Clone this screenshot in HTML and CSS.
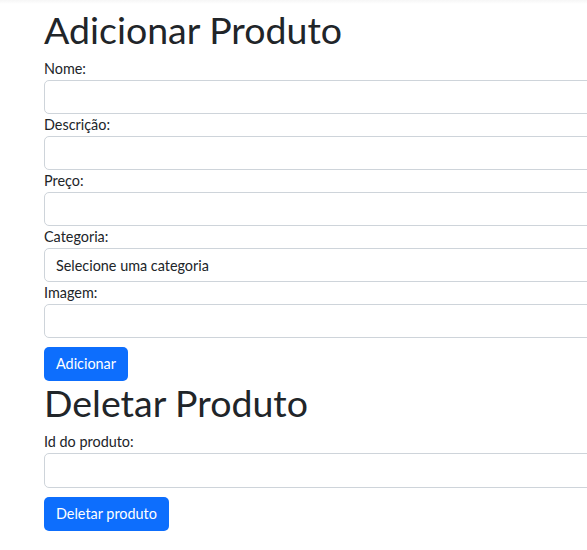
FILE: index.html
```html
<!DOCTYPE html>
<html lang="pt-BR">
<head>
<meta charset="utf-8">
<title>Produtos</title>
<link rel="stylesheet" href="styles.css">
</head>
<body>
<div class="topbar"></div>
<main class="page">
  <form class="panel">
    <h1 class="title">Adicionar Produto</h1>
    <label class="label" for="nome">Nome:</label>
    <input class="field" id="nome" type="text">
    <label class="label" for="descricao">Descrição:</label>
    <input class="field" id="descricao" type="text">
    <label class="label" for="preco">Preço:</label>
    <input class="field" id="preco" type="text">
    <label class="label" for="categoria">Categoria:</label>
    <select class="field select" id="categoria">
      <option>Selecione uma categoria</option>
    </select>
    <label class="label" for="imagem">Imagem:</label>
    <input class="field" id="imagem" type="text">
    <button class="btn" type="button">Adicionar</button>
  </form>
  <form class="panel panel-delete">
    <h1 class="title">Deletar Produto</h1>
    <label class="label" for="id">Id do produto:</label>
    <input class="field field-id" id="id" type="text">
    <button class="btn" type="button">Deletar produto</button>
  </form>
</main>
</body>
</html>
```
FILE: styles.css
```css
html, body {
  margin: 0;
  padding: 0;
  background: #fff;
  overflow: hidden;
}
body {
  font-family: "Lato", "Noto Sans", sans-serif;
  color: #212529;
}
.topbar {
  height: 4px;
  background: linear-gradient(#f6f6f6, #fff);
}
.page {
  padding: 4px 0 0 44px;
  width: 640px;
}
.panel {
  display: flex;
  flex-direction: column;
  align-items: stretch;
  margin: 0;
}
.title {
  font-size: 37.5px;
  font-weight: 400;
  line-height: 43px;
  margin: 0 0 7px;
  color: #212529;
}
.label {
  display: block;
  font-size: 14.4px;
  line-height: 22px;
  color: #212529;
}
.field {
  display: block;
  box-sizing: border-box;
  width: 100%;
  height: 34px;
  margin: 0;
  padding: 0 11px;
  border: 1px solid #ced4da;
  border-radius: 5px;
  background: #fff;
  font-family: inherit;
  font-size: 14.4px;
  color: #212529;
}
.field-id {
  height: 35px;
}
.select {
  appearance: none;
  -webkit-appearance: none;
}
.btn {
  align-self: flex-start;
  margin-top: 9px;
  height: 34px;
  padding: 0 12px;
  border: 0;
  border-radius: 5px;
  background: #0d6efd;
  color: #fff;
  font-family: inherit;
  font-size: 14.4px;
  line-height: 34px;
}
```
